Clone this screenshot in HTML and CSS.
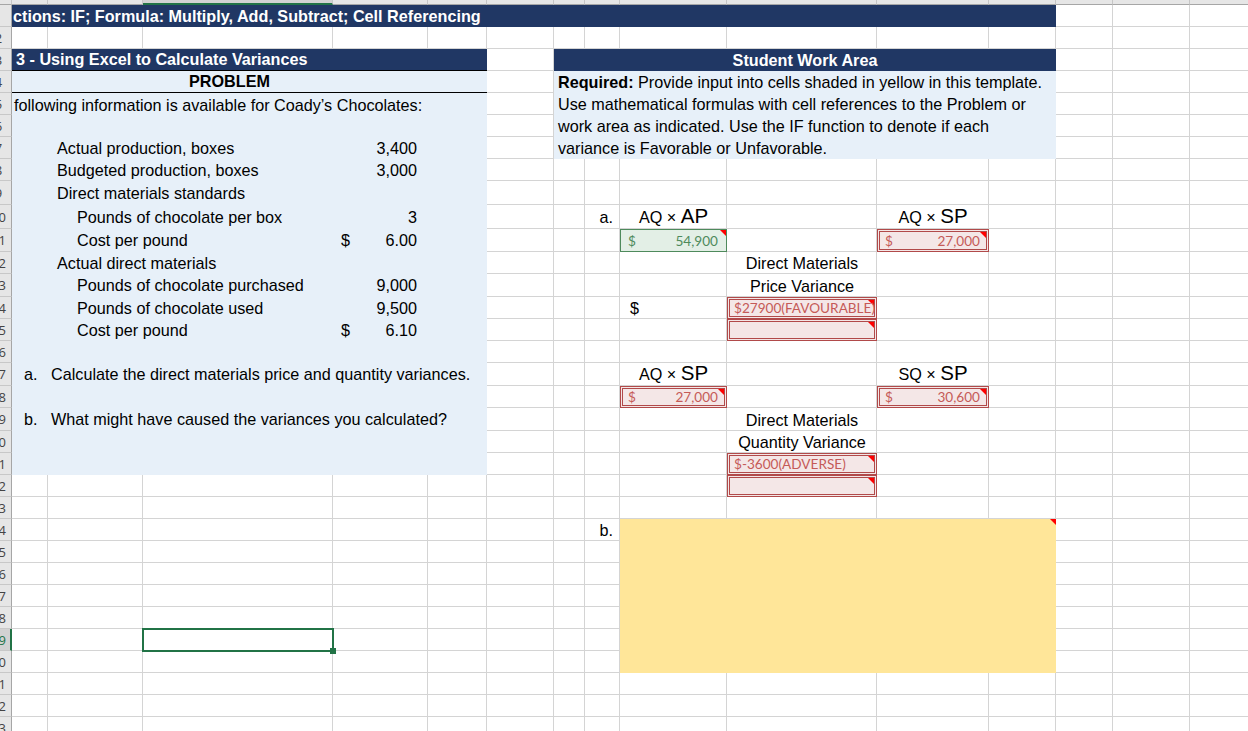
FILE: index.html
```html
<!DOCTYPE html>
<html lang="en">
<head>
    <meta charset="UTF-8">
    <meta name="viewport" content="width=device-width, initial-scale=1.0">
    <title>Using Excel to Calculate Variances</title>
    <link rel="stylesheet" href="styles.css">
</head>
<body>

<!-- Worksheet: empty cells, row and column headers are added by script.js -->
<div class="sheet" id="sheet">

    <!-- Title bar -->
    <div class="title">ctions: IF; Formula: Multiply, Add, Subtract; Cell Referencing</div>

    <!-- Problem -->
    <div class="heading heading-left">3 - Using Excel to Calculate Variances</div>
    <div class="panel panel-problem"></div>
    <div class="problem-label">PROBLEM</div>
    <div class="intro">following information is available for Coady’s Chocolates:</div>

    <div class="line r7"><span class="label">Actual production, boxes</span><span class="amt"><span></span><span>3,400</span></span></div>
    <div class="line r8"><span class="label">Budgeted production, boxes</span><span class="amt"><span></span><span>3,000</span></span></div>
    <div class="line r9"><span class="label">Direct materials standards</span></div>
    <div class="line sub r10"><span class="label">Pounds of chocolate per box</span><span class="amt"><span></span><span>3</span></span></div>
    <div class="line sub r11"><span class="label">Cost per pound</span><span class="amt"><span>$</span><span>6.00</span></span></div>
    <div class="line r12"><span class="label">Actual direct materials</span></div>
    <div class="line sub r13"><span class="label">Pounds of chocolate purchased</span><span class="amt"><span></span><span>9,000</span></span></div>
    <div class="line sub r14"><span class="label">Pounds of chocolate used</span><span class="amt"><span></span><span>9,500</span></span></div>
    <div class="line sub r15"><span class="label">Cost per pound</span><span class="amt"><span>$</span><span>6.10</span></span></div>

    <div class="question r17"><span class="mark">a.</span><span>Calculate the direct materials price and quantity variances.</span></div>
    <div class="question r19"><span class="mark">b.</span><span>What might have caused the variances you calculated?</span></div>

    <!-- Student work area -->
    <div class="heading heading-right">Student Work Area</div>
    <div class="required">
        <b>Required:</b> Provide input into cells shaded in yellow in this template.<br>
        Use mathematical formulas with cell references to the Problem or<br>
        work area as indicated. Use the IF function to denote if each<br>
        variance is Favorable or Unfavorable.
    </div>

    <div class="tag r10 cH">a.</div>
    <div class="formula r10 cI"><span>AQ × <span class="big">AP</span></span></div>
    <div class="formula r10 cK"><span>AQ × <span class="big">SP</span></span></div>
    <div class="val good note r11 cI"><span>$</span><span>54,900</span></div>
    <div class="val bad note r11 cK"><span>$</span><span>27,000</span></div>
    <div class="caption r12 cJ">Direct Materials</div>
    <div class="caption r13 cJ">Price Variance</div>
    <div class="dollar r14 cI">$</div>
    <div class="val bad text note r14 cJ"><span>$27900(FAVOURABLE)</span></div>
    <div class="val bad note r15 cJ"></div>

    <div class="formula r17 cI"><span>AQ × <span class="big">SP</span></span></div>
    <div class="formula r17 cK"><span>SQ × <span class="big">SP</span></span></div>
    <div class="val bad note r18 cI"><span>$</span><span>27,000</span></div>
    <div class="val bad note r18 cK"><span>$</span><span>30,600</span></div>
    <div class="caption r19 cJ">Direct Materials</div>
    <div class="caption r20 cJ">Quantity Variance</div>
    <div class="val bad text note r21 cJ"><span>$-3600(ADVERSE)</span></div>
    <div class="val bad note r22 cJ"></div>

    <div class="tag r24 cH">b.</div>
    <div class="answer note"></div>

    <!-- Active cell C29 -->
    <div class="selected"></div>
</div>

<script src="script.js"></script>
</body>
</html>
```

FILE: styles.css
```css
* {
    box-sizing: border-box;
}

body {
    margin: 0;
    overflow: hidden;
    background: #fff;
    color: #000;
    font-family: "Liberation Sans", Arial, sans-serif;
    font-size: 16.2px;
}

/* Worksheet grid: row header + columns A..O, header strip + rows 1..33 */
.sheet {
    display: grid;
    grid-template-columns: 12px 36px 95px 190px 95px 59px 67px 31px 35px 107px 150px 112px 67px 57px 77px 80px;
    grid-template-rows: 5px repeat(8, 22px) 24px 24px 23px 22px 23px 22px 22px 22px 23px 22px 23px repeat(14, 22px);
    width: 1270px;
}

.cell {
    border-right: 1px solid #d4d4d4;
    border-bottom: 1px solid #d4d4d4;
}

.corner,
.colhead {
    background: #e6e6e6;
    border-right: 1px solid #c6c6c6;
    border-bottom: 1px solid #a6a6a6;
}

.colhead.active {
    background: #d2d2d2;
    border-bottom: 2px solid #217346;
}

.rowhead {
    background: #e6e6e6;
    border-right: 1px solid #a6a6a6;
    border-bottom: 1px solid #c8c8c8;
    overflow: hidden;
    display: flex;
    align-items: center;
    font-family: "Open Sans", sans-serif;
    font-size: 13px;
    color: #444;
}

.rowhead span {
    flex: none;
    width: 27px;
    margin-left: -15px;
    text-align: center;
}

.rowhead.active {
    background: #d2d2d2;
    border-right: 2px solid #217346;
    color: #217346;
}

/* Row placement (sheet row n sits on grid row n + 1) */
.r7 { grid-row: 8; }
.r8 { grid-row: 9; }
.r9 { grid-row: 10; }
.r10 { grid-row: 11; }
.r11 { grid-row: 12; }
.r12 { grid-row: 13; }
.r13 { grid-row: 14; }
.r14 { grid-row: 15; }
.r15 { grid-row: 16; }
.r17 { grid-row: 18; }
.r18 { grid-row: 19; }
.r19 { grid-row: 20; }
.r20 { grid-row: 21; }
.r21 { grid-row: 22; }
.r22 { grid-row: 23; }
.r24 { grid-row: 25; }

/* Column placement */
.cH { grid-column: 9; }
.cI { grid-column: 10; }
.cJ { grid-column: 11; }
.cK { grid-column: 12; }

/* Title and headings */
.title {
    grid-row: 2;
    grid-column: 2 / 14;
    background: #203764;
    color: #fff;
    font-weight: bold;
    white-space: nowrap;
    display: flex;
    align-items: flex-end;
    padding: 0 0 1px 1px;
}

.heading {
    grid-row: 4;
    background: #203764;
    color: #fff;
    font-weight: bold;
    white-space: nowrap;
    display: flex;
    align-items: center;
}

.heading-left {
    grid-column: 2 / 7;
    padding-left: 4px;
    border-bottom: 1px solid #000;
}

.heading-right {
    grid-column: 8 / 14;
    justify-content: center;
}

/* Problem panel */
.panel-problem {
    grid-row: 5 / 23;
    grid-column: 2 / 7;
    background: #e7f0f9;
}

.problem-label {
    grid-row: 5;
    grid-column: 2 / 7;
    display: flex;
    justify-content: center;
    align-items: flex-end;
    padding: 0 40px 1px 0;
    font-weight: bold;
    border-bottom: 1px solid #000;
}

.intro {
    grid-row: 6;
    grid-column: 2 / 7;
    display: flex;
    align-items: flex-end;
    padding-left: 2px;
    white-space: nowrap;
}

.line {
    grid-column: 3 / 6;
    display: flex;
    align-items: center;
    white-space: nowrap;
}

.line .label {
    flex: 1;
    padding-left: 9px;
}

.line.sub .label {
    padding-left: 29px;
}

.amt {
    width: 95px;
    display: flex;
    justify-content: space-between;
    padding: 0 11px 0 8px;
}

.question {
    grid-column: 2 / 7;
    display: flex;
    align-items: center;
    white-space: nowrap;
}

.question .mark {
    width: 39px;
    padding-left: 12px;
}

/* Student work area */
.required {
    grid-row: 5 / 9;
    grid-column: 8 / 14;
    background: #e7f0f9;
    padding-left: 4px;
    line-height: 22px;
    white-space: nowrap;
}

.tag {
    display: flex;
    justify-content: flex-end;
    align-items: center;
    padding-right: 7px;
}

.formula,
.caption {
    display: flex;
    justify-content: center;
    align-items: flex-end;
    padding-bottom: 1px;
    white-space: nowrap;
}

.formula .big {
    font-size: 20.5px;
}

.dollar {
    display: flex;
    align-items: center;
    padding-left: 10px;
}

.val {
    position: relative;
    display: flex;
    justify-content: space-between;
    align-items: center;
    font-family: Lato, "Open Sans", sans-serif;
    font-size: 13.6px;
    white-space: nowrap;
}

.val span {
    position: relative;
    z-index: 1;
}

.val.good {
    background: #e3efe6;
    border: 1px solid #4e8a5c;
    color: #4e8a5c;
    padding: 0 8px 0 7px;
}

.val.bad {
    background: #f4e7e7;
    border: 3px double #b14a4a;
    color: #c55a57;
    padding: 0 6px 0 5px;
}

.val.text {
    justify-content: flex-start;
    padding-left: 4px;
}

.answer {
    position: relative;
    grid-row: 25 / 32;
    grid-column: 10 / 14;
    background: #ffe699;
}

/* Red comment marker */
.note::after {
    content: "";
    position: absolute;
    top: 0;
    right: 0;
    border-style: solid;
    border-width: 0 6px 6px 0;
    border-color: transparent #ff0000 transparent transparent;
}

/* Active cell */
.selected {
    position: relative;
    grid-row: 30;
    grid-column: 4;
    margin: -1px;
    border: 2px solid #217346;
}

.selected::after {
    content: "";
    position: absolute;
    right: -4px;
    bottom: -4px;
    width: 6px;
    height: 6px;
    background: #217346;
}
```

FILE: script.js
```js
// Build the empty worksheet behind the content: header strip, row numbers and gridline cells
var sheet = document.getElementById('sheet');
var first = sheet.firstChild;

var ROWS = 33;
var COLS = 15;          // A..O
var ACTIVE_ROW = 29;    // C29 is selected
var ACTIVE_COL = 3;

function addCell(cls, row, col, text) {
    var el = document.createElement('div');
    el.className = cls;
    el.style.gridRow = row;
    el.style.gridColumn = col;
    if (text) {
        el.innerHTML = '<span>' + text + '</span>';
    }
    sheet.insertBefore(el, first);
}

addCell('corner', 1, 1);
for (var c = 1; c <= COLS; c++) {
    addCell(c === ACTIVE_COL ? 'colhead active' : 'colhead', 1, c + 1);
}

for (var r = 1; r <= ROWS; r++) {
    addCell(r === ACTIVE_ROW ? 'rowhead active' : 'rowhead', r + 1, 1, String(r));
    for (var k = 1; k <= COLS; k++) {
        addCell('cell', r + 1, k + 1);
    }
}
```
